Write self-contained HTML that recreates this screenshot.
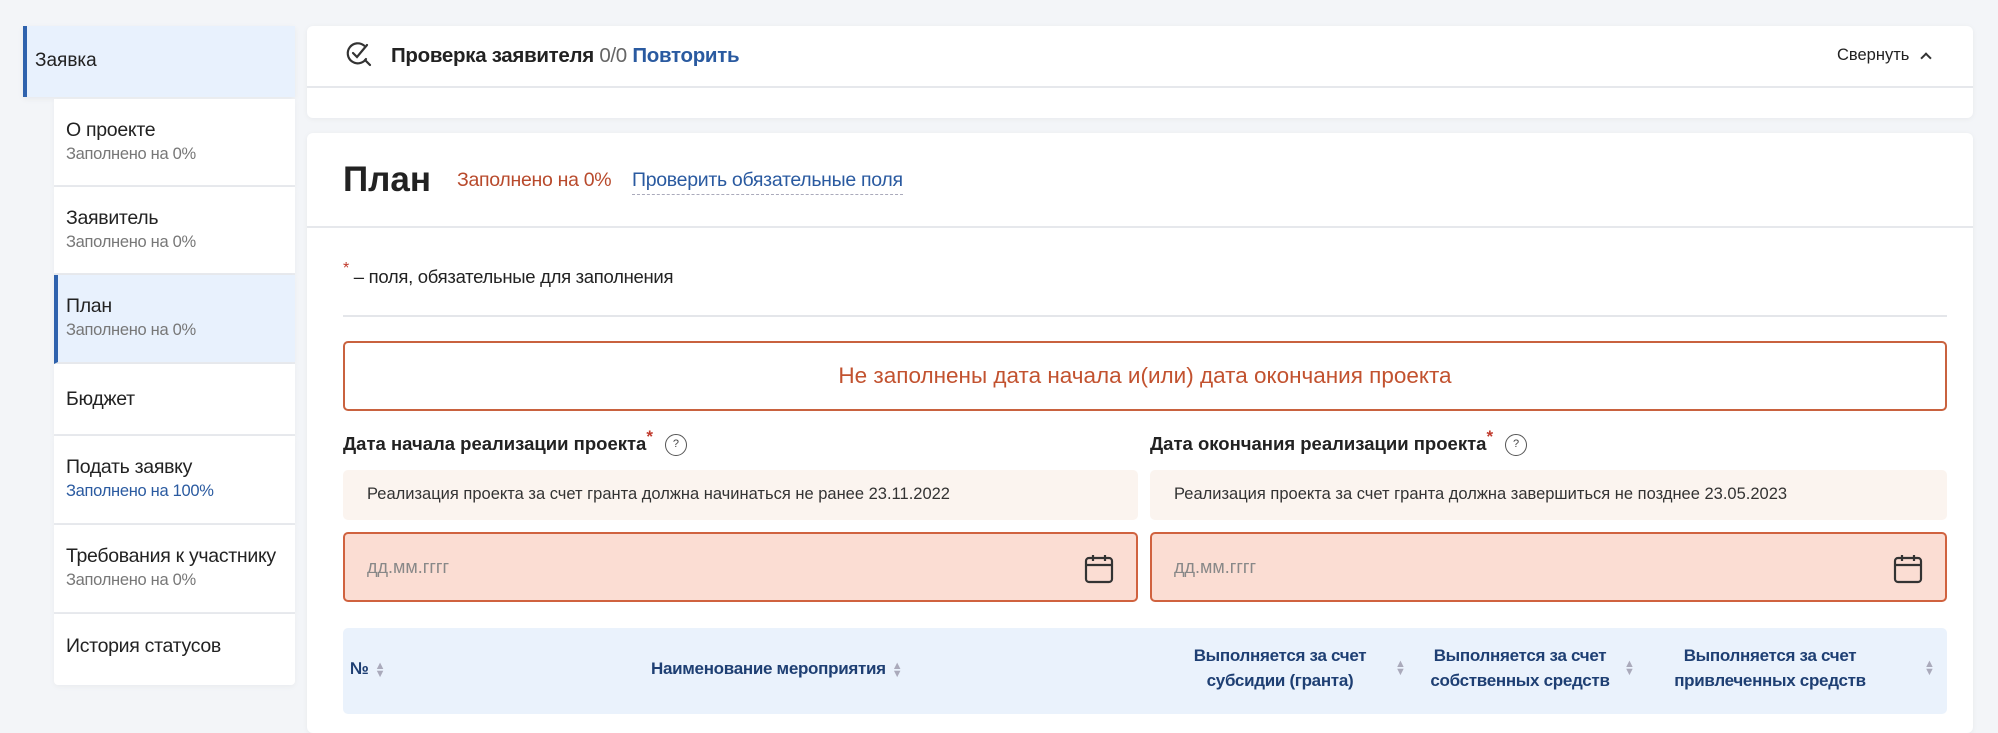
<!DOCTYPE html>
<html><head><meta charset="utf-8">
<style>
*{box-sizing:border-box;margin:0;padding:0}
body{width:1998px;height:714px;overflow:hidden;background:#f3f5f8;font-family:"Liberation Sans",sans-serif;color:#222;position:relative}
.abs{position:absolute;white-space:nowrap}
.sh{position:absolute;left:23px;top:26px;width:272px;height:71px;background:#e8f1fd;border-left:4px solid #2f62ad;font-size:19px;padding:35px 0 0 8px;line-height:0;box-shadow:0 2px 6px rgba(0,0,0,.05)}
.it{position:absolute;left:54px;width:241px;background:#fff;border-bottom:2px solid #e8eaee;padding-left:12px;box-shadow:0 2px 6px rgba(0,0,0,.04);white-space:nowrap}
.it .t{font-size:19.5px;color:#222;letter-spacing:-0.3px}
.it .s{font-size:16.5px;color:#777;margin-top:3px;letter-spacing:-0.3px}
.card{background:#fff;border-radius:6px;box-shadow:0 1px 6px rgba(0,0,0,.05)}
.lab{font-size:18.5px;font-weight:bold;color:#222}
.star{color:#c0392b;font-size:17px;vertical-align:top;position:relative;top:-6px}
.q{display:inline-block;width:22px;height:22px;border:1.5px solid #555;border-radius:50%;font-size:11px;text-align:center;line-height:19px;color:#444;margin-left:12px;vertical-align:middle;font-weight:normal}
.info{background:#fbf4ef;border-radius:5px;font-size:16.5px;color:#333;padding:15px 0 0 24px;white-space:nowrap}
.inp{background:#fbddd3;border:2px solid #d0623f;border-radius:5px;font-size:18px;color:#888;padding:23px 0 0 22px}
.th{font-size:17px;font-weight:bold;color:#1e3f73;text-align:center;line-height:25px;letter-spacing:-0.3px}
.sort{color:#aab;font-size:11px;line-height:8px;display:inline-block;vertical-align:middle;margin-left:6px}
</style></head><body>
<div class="sh">Заявка</div>
<div class="it" style="top:99px;height:88px;padding-top:20px"><div class="t">О проекте</div><div class="s">Заполнено на 0%</div></div>
<div class="it" style="top:187px;height:88px;padding-top:20px"><div class="t">Заявитель</div><div class="s">Заполнено на 0%</div></div>
<div class="it" style="top:275px;height:89px;padding-top:20px;background:#e8f1fd;border-left:4px solid #2f62ad;padding-left:8px"><div class="t">План</div><div class="s">Заполнено на 0%</div></div>
<div class="it" style="top:364px;height:72px;padding-top:24px"><div class="t">Бюджет</div></div>
<div class="it" style="top:436px;height:89px;padding-top:20px"><div class="t">Подать заявку</div><div class="s" style="color:#2a5aa0">Заполнено на 100%</div></div>
<div class="it" style="top:525px;height:89px;padding-top:20px"><div class="t">Требования к участнику</div><div class="s">Заполнено на 0%</div></div>
<div class="it" style="top:614px;height:71px;padding-top:21px;border-bottom:none;border-radius:0 0 4px 4px"><div class="t">История статусов</div></div>

<div class="abs card" style="left:307px;top:26px;width:1666px;height:92px"></div>
<div class="abs" style="left:307px;top:86px;width:1666px;height:2px;background:#e6e8ec"></div>
<svg class="abs" style="left:345px;top:40px" width="30" height="30" viewBox="0 0 30 30" fill="none" stroke="#333" stroke-width="2.2" stroke-linecap="round"><path d="M19 5.5A10 10 0 1 0 21 19"/><path d="M8 13l4 4 10-12"/><path d="M20 20l5 5"/></svg>
<div class="abs" style="left:391px;top:44px;font-size:20.5px;font-weight:bold;letter-spacing:-0.3px">Проверка заявителя <span style="font-weight:normal;color:#666">0/0</span> <span style="color:#2a5aa0">Повторить</span></div>
<div class="abs" style="left:1837px;top:46px;font-size:16.5px;color:#222">Свернуть <span style="display:inline-block;width:8px;height:8px;border-left:2px solid #333;border-top:2px solid #333;transform:rotate(45deg);margin-left:8px;position:relative;top:2px"></span></div>

<div class="abs card" style="left:307px;top:133px;width:1666px;height:600px"></div>
<div class="abs" style="left:343px;top:160px;font-size:35px;font-weight:bold">План</div>
<div class="abs" style="left:457px;top:169px;font-size:19.5px;color:#b84a2c;letter-spacing:-0.3px">Заполнено на 0%</div>
<div class="abs" style="left:632px;top:169px;font-size:19.5px;color:#2a5aa0;letter-spacing:-0.3px;border-bottom:1.5px dashed #aab;padding-bottom:2px">Проверить обязательные поля</div>
<div class="abs" style="left:307px;top:226px;width:1666px;height:2px;background:#e6e8ec"></div>
<div class="abs" style="left:343px;top:266px;font-size:18.5px;letter-spacing:-0.3px"><span class="star" style="font-size:16px">*</span> – поля, обязательные для заполнения</div>
<div class="abs" style="left:343px;top:315px;width:1604px;height:2px;background:#e4e6ea"></div>
<div class="abs" style="left:343px;top:341px;width:1604px;height:70px;border:2px solid #c9623f;border-radius:5px;text-align:center;font-size:22.5px;color:#c2522f;padding-top:20px">Не заполнены дата начала и(или) дата окончания проекта</div>
<div class="abs lab" style="left:343px;top:433px">Дата начала реализации проекта<span class="star">*</span><span class="q">?</span></div>
<div class="abs lab" style="left:1150px;top:433px">Дата окончания реализации проекта<span class="star">*</span><span class="q">?</span></div>
<div class="abs info" style="left:343px;top:470px;width:795px;height:50px">Реализация проекта за счет гранта должна начинаться не ранее 23.11.2022</div>
<div class="abs info" style="left:1150px;top:470px;width:797px;height:50px">Реализация проекта за счет гранта должна завершиться не позднее 23.05.2023</div>
<div class="abs inp" style="left:343px;top:532px;width:795px;height:70px">дд.мм.гггг</div>
<div class="abs inp" style="left:1150px;top:532px;width:797px;height:70px">дд.мм.гггг</div>
<svg class="abs" style="left:1083px;top:552px" width="32" height="32" viewBox="0 0 32 32" fill="none" stroke="#333" stroke-width="2.2"><rect x="3" y="6" width="26" height="24" rx="3"/><path d="M3 13h26M10 3v6M22 3v6"/></svg>
<svg class="abs" style="left:1892px;top:552px" width="32" height="32" viewBox="0 0 32 32" fill="none" stroke="#333" stroke-width="2.2"><rect x="3" y="6" width="26" height="24" rx="3"/><path d="M3 13h26M10 3v6M22 3v6"/></svg>
<div class="abs" style="left:343px;top:628px;width:1604px;height:86px;background:#eaf2fc;border-radius:5px"></div>
<div class="abs th" style="left:350px;top:656px">№<span class="sort">▲<br>▼</span></div>
<div class="abs th" style="left:651px;top:656px">Наименование мероприятия<span class="sort">▲<br>▼</span></div>
<div class="abs th" style="left:1170px;top:643px;width:220px">Выполняется за счет<br>субсидии (гранта)</div><span class="abs sort" style="left:1389px;top:660px">▲<br>▼</span>
<div class="abs th" style="left:1410px;top:643px;width:220px">Выполняется за счет<br>собственных средств</div><span class="abs sort" style="left:1618px;top:660px">▲<br>▼</span>
<div class="abs th" style="left:1650px;top:643px;width:240px">Выполняется за счет<br>привлеченных средств</div><span class="abs sort" style="left:1918px;top:660px">▲<br>▼</span>
</body></html>
